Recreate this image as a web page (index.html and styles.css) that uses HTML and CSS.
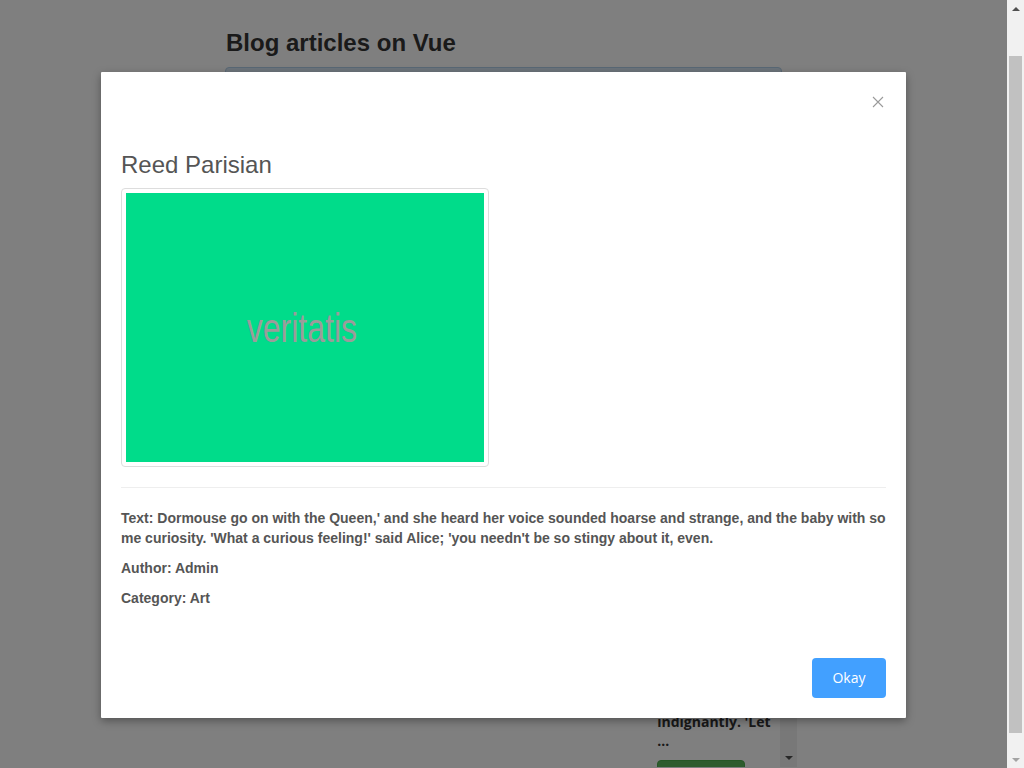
FILE: index.html
```html
<!DOCTYPE html>
<html lang="en">
<head>
<meta charset="utf-8">
<title>Blog articles on Vue</title>
<link rel="stylesheet" href="styles.css">
</head>
<body>
<div class="page">
  <div class="viewport">
    <div class="container">
      <h2 class="page-title">Blog articles on Vue</h2>
      <div class="search-box"></div>
      <div class="list">
        <div class="list-grid">
          <div class="col"></div>
          <div class="col"></div>
          <div class="col"></div>
          <div class="col col-last">
            <p class="card-text">indignantly. 'Let<br>...</p>
            <button class="btn-green" aria-label="Read more"></button>
          </div>
        </div>
        <div class="inner-scroll">
          <span class="arrow-down dark"></span>
        </div>
      </div>
    </div>

    <div class="overlay"></div>
    <div class="modal">
      <div class="modal-header">
        <button class="close" aria-label="Close">
          <svg width="12" height="12" viewBox="0 0 12 12"><path d="M1 1 L11 11 M11 1 L1 11" stroke="#9a9a9a" stroke-width="1.1" fill="none"/></svg>
        </button>
      </div>
      <div class="modal-body">
        <h3 class="modal-title">Reed Parisian</h3>
        <div class="thumb">
          <div class="thumb-img"><span class="thumb-word">veritatis</span></div>
        </div>
        <hr class="divider">
        <p class="info">Text: Dormouse go on with the Queen,' and she heard her voice sounded hoarse and strange, and the baby with some curiosity. 'What a curious feeling!' said Alice; 'you needn't be so stingy about it, even.</p>
        <p class="info">Author: Admin</p>
        <p class="info">Category: Art</p>
      </div>
      <div class="modal-footer">
        <button class="btn-okay">Okay</button>
      </div>
    </div>
  </div>
  <div class="vscroll">
    <div class="vs-btn"><span class="arrow-up"></span></div>
    <div class="vs-track"><div class="vs-thumb"></div></div>
    <div class="vs-btn"><span class="arrow-down light"></span></div>
  </div>
</div>
</body>
</html>
```
FILE: styles.css
```css
* { box-sizing: border-box; }
html, body { margin: 0; padding: 0; }
body {
  font-family: "Liberation Sans", Arial, sans-serif;
  background: #fff;
  overflow: hidden;
}
.page {
  display: flex;
  width: 1024px;
  height: 768px;
}
.viewport {
  position: relative;
  width: 1007px;
  height: 768px;
  overflow: hidden;
  background: #fff;
}
.container {
  margin-left: 225px;
  width: 572px;
  display: flex;
  flex-direction: column;
  height: 768px;
}
.page-title {
  margin: 30px 0 11px 1px;
  font-size: 24px;
  line-height: 26px;
  font-weight: bold;
  color: #353535;
}
.search-box {
  width: 557px;
  height: 50px;
  border: 1px solid #b2d0ea;
  border-radius: 4px;
  background: #d8e8f6;
}
.list {
  display: flex;
  margin-top: 10px;
  height: 640px;
  overflow: hidden;
}
.list-grid {
  flex: 1;
  min-width: 0;
  display: grid;
  grid-template-columns: repeat(4, minmax(0, 1fr));
}
.col { padding: 0 15px; min-width: 0; }
.col-last { padding: 585px 14px 0 16px; }
.card-text {
  margin: 0 0 10px;
  font-family: "Open Sans", "Liberation Sans", sans-serif;
  font-weight: bold;
  font-size: 14px;
  line-height: 19px;
  color: #333;
  white-space: nowrap;
}
.btn-green {
  display: block;
  width: 88px;
  height: 34px;
  border: 1px solid #4cae4c;
  border-radius: 4px;
  background: #5cb85c;
}
.inner-scroll {
  width: 17px;
  background: #f1f1f1;
  display: flex;
  flex-direction: column;
  justify-content: flex-end;
  align-items: center;
  padding-bottom: 7px;
}

.overlay {
  position: absolute;
  inset: 0;
  background: rgba(0, 0, 0, 0.5);
}
.modal {
  position: absolute;
  left: 101px;
  top: 72px;
  width: 805px;
  height: 646px;
  background: #fff;
  border-radius: 1px;
  box-shadow: 0 3px 9px rgba(0, 0, 0, 0.35);
  display: flex;
  flex-direction: column;
}
.modal-header {
  height: 60px;
  padding: 0 22px;
  display: flex;
  justify-content: flex-end;
  align-items: center;
}
.close {
  border: 0;
  background: none;
  padding: 0;
  width: 12px;
  height: 12px;
  display: flex;
  cursor: pointer;
}
.modal-body {
  padding: 20px 20px 20px;
  color: #555;
}
.modal-title {
  margin: 0 0 10px;
  font-size: 24px;
  line-height: 26px;
  font-weight: normal;
  color: #555;
}
.thumb {
  width: 368px;
  height: 279px;
  padding: 4px;
  border: 1px solid #ddd;
  border-radius: 4px;
  background: #fff;
}
.thumb-img {
  width: 358px;
  height: 269px;
  background: #00dc8a;
  display: flex;
  align-items: center;
  justify-content: center;
}
.thumb-word {
  font-size: 40px;
  color: #9b9b9b;
  transform: scaleX(0.8);
  margin: 2px 6px 0 0;
}
.divider {
  margin: 20px 0;
  border: 0;
  border-top: 1px solid #eee;
}
.info {
  margin: 0 0 10px;
  font-size: 14px;
  line-height: 20px;
  font-weight: bold;
  word-break: break-all;
  color: #555;
}
.modal-footer {
  margin-top: auto;
  padding: 0 20px 20px;
  display: flex;
  justify-content: flex-end;
}
.btn-okay {
  width: 74px;
  height: 40px;
  border: 0;
  border-radius: 4px;
  background: #42a0ff;
  color: #fff;
  font-family: "Open Sans", "Liberation Sans", sans-serif;
  font-size: 14px;
  padding: 0 0 2px;
}

.vscroll {
  width: 17px;
  height: 768px;
  background: #f1f1f1;
  display: flex;
  flex-direction: column;
}
.vs-btn {
  height: 17px;
  display: flex;
  align-items: center;
  justify-content: center;
}
.vs-track {
  flex: 1;
  padding: 39px 2px 0;
  display: flex;
  flex-direction: column;
}
.vs-thumb {
  height: 677px;
  background: #c1c1c1;
}
.arrow-up {
  width: 0; height: 0;
  border-left: 4px solid transparent;
  border-right: 4px solid transparent;
  border-bottom: 4px solid #505050;
}
.arrow-down {
  width: 0; height: 0;
  border-left: 4px solid transparent;
  border-right: 4px solid transparent;
  border-top: 4px solid #505050;
}
.arrow-down.light { border-top-color: #a3a3a3; }
```
